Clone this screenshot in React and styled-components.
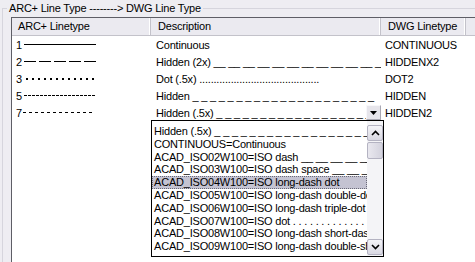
import React from 'react';
import styled, { createGlobalStyle } from 'styled-components';

const Global = createGlobalStyle`
  html, body { margin: 0; padding: 0; background: #EEEDF2; }
  body {
    font-family: "Liberation Sans", Arial, sans-serif;
    font-size: 11px;
    letter-spacing: -0.2px;
    color: #000;
  }
  * { box-sizing: border-box; }
`;

const Window = styled.div`
  width: 475px;
  height: 262px;
  overflow: hidden;
  background: #EEEDF2;
  padding-top: 2px;
`;

const Group = styled.fieldset`
  margin: 0 0 0 2px;
  padding: 2px 0 0 8px;
  min-width: 0;
  border: 1px solid #D6D5DD;
  border-right: none;
  border-bottom: none;
`;

const Legend = styled.legend`
  margin-left: -4px;
  padding: 0 2px;
  line-height: 13px;
  white-space: nowrap;
`;

const ListView = styled.div`
  position: relative;
  width: 480px;
  height: 260px;
  background: #fff;
  border-top: 1px solid #5E5E66;
  border-left: 1px solid #5E5E66;
`;

const cols = '139px 230px 85px 1fr';

const HeaderRow = styled.div`
  display: grid;
  grid-template-columns: ${cols};
  height: 18px;
  background: #EBEAF0;
  border-bottom: 1px solid #C3C2CA;
`;

const HeaderCell = styled.div`
  padding-left: ${p => (p.$first ? 6 : 7)}px;
  line-height: 17px;
  border-right: 1px solid #C3C2CA;
  box-shadow: inset -1px 0 0 #fff;
  white-space: nowrap;
  overflow: hidden;
`;

const Row = styled.div`
  display: grid;
  grid-template-columns: ${cols};
  height: 17px;
  align-items: center;
`;

const NumCell = styled.div`
  display: flex;
  align-items: center;
  padding-left: 4px;
  gap: ${p => p.$gap}px;
  white-space: nowrap;
`;

const Cell = styled.div`
  padding-left: ${p => p.$pad}px;
  white-space: nowrap;
  overflow: ${p => (p.$visible ? 'visible' : 'hidden')};
`;

const Combo = styled.div`
  display: flex;
  align-items: center;
  width: 232px;
  height: 17px;
  margin-left: -1px;
  padding-left: 6px;
`;

const ComboText = styled.div`
  flex: 1;
  overflow: hidden;
  white-space: nowrap;
`;

const ComboButton = styled.div`
  width: 15px;
  height: 15px;
  display: flex;
  align-items: center;
  justify-content: center;
  background: #E6E5EB;
  border: 1px solid #A9A8B3;
  border-top-color: #F7F7FA;
  border-left-color: #F7F7FA;
  margin-right: 1px;
`;

const DropList = styled.div`
  position: absolute;
  left: 139px;
  top: 102px;
  width: 233px;
  height: 137px;
  border: 1px solid #000;
  background: #fff;
  display: flex;
`;

const Items = styled.div`
  flex: 1;
  min-width: 0;
  padding-top: 4px;
`;

const Item = styled.div`
  height: 12.8px;
  line-height: 12.8px;
  padding-left: 2px;
  white-space: nowrap;
  overflow: hidden;
  background: ${p => (p.$selected ? '#C4C3D2' : 'transparent')};
  outline: ${p => (p.$selected ? '1px dotted #6A6A78' : 'none')};
  outline-offset: -1px;
`;

const ScrollBar = styled.div`
  width: 16px;
  display: flex;
  flex-direction: column;
  padding: 4px 0 1px;
  background: #F4F4F7;
`;

const ScrollBtn = styled.div`
  height: 16px;
  flex: none;
  display: flex;
  align-items: center;
  justify-content: center;
  background: linear-gradient(#F4F4F8, #D9D8E2);
  border: 1px solid #B4B3C2;
  border-radius: 2px;
`;

const Thumb = styled.div`
  height: 17px;
  flex: none;
  margin-top: 1px;
  background: linear-gradient(90deg, #E9E8EF, #D3D2DD);
  border: 1px solid #B4B3C2;
  border-radius: 2px;
`;

const Track = styled.div`
  flex: 1;
`;

function Sample({ kind }) {
  const w = 74;
  let shapes = null;
  if (kind === 'solid') {
    shapes = <rect x="0" y="4" width="72" height="1" fill="#000" />;
  } else if (kind === 'dash') {
    shapes = [0, 1, 2, 3, 4].map(i => (
      <rect key={i} x={i * 15} y="4" width="12" height="1" fill="#000" />
    ));
  } else if (kind === 'dot') {
    shapes = Array.from({ length: 12 }, (_, i) => (
      <rect key={i} x={2 + i * 6} y="4" width="2" height="2" fill="#000" />
    ));
  } else if (kind === 'fine') {
    shapes = Array.from({ length: 18 }, (_, i) => (
      <rect key={i} x={i * 4} y="4" width="3" height="1" fill="#000" />
    ));
  } else if (kind === 'dashed') {
    shapes = Array.from({ length: 12 }, (_, i) => (
      <rect key={i} x={i * 6} y="4" width="3" height="1" fill="#000" />
    ));
  }
  return (
    <svg width={w} height="9" viewBox={`0 0 ${w} 9`}>
      {shapes}
    </svg>
  );
}

function Chevron({ up }) {
  return (
    <svg width="9" height="6" viewBox="0 0 9 6">
      <path
        d={up ? 'M1 5 L4.5 1.5 L8 5' : 'M1 1 L4.5 4.5 L8 1'}
        fill="none"
        stroke="#000"
        strokeWidth="1.6"
      />
    </svg>
  );
}

const rows = [
  { n: '1', kind: 'solid', desc: 'Continuous', dwg: 'CONTINUOUS' },
  { n: '2', kind: 'dash', desc: 'Hidden (2x) __ __ __ __ __ __ __ __ __ __ __ __', dwg: 'HIDDENX2' },
  { n: '3', kind: 'dot', desc: 'Dot (.5x) ..........................................', dwg: 'DOT2' },
  { n: '5', kind: 'fine', desc: 'Hidden _ _ _ _ _ _ _ _ _ _ _ _ _ _ _ _ _ _ _ _ _', dwg: 'HIDDEN' },
  { n: '7', kind: 'dashed', desc: null, dwg: 'HIDDEN2' },
];

const items = [
  'Hidden (.5x) _ _ _ _ _ _ _ _ _ _ _ _ _ _ _ _ _ _ _ _',
  'CONTINUOUS=Continuous',
  'ACAD_ISO02W100=ISO dash __ __ __ __ __ __',
  'ACAD_ISO03W100=ISO dash space __ __ __ __',
  'ACAD_ISO04W100=ISO long-dash dot',
  'ACAD_ISO05W100=ISO long-dash double-dot',
  'ACAD_ISO06W100=ISO long-dash triple-dot',
  'ACAD_ISO07W100=ISO dot . . . . . . . . . . . . . .',
  'ACAD_ISO08W100=ISO long-dash short-dash',
  'ACAD_ISO09W100=ISO long-dash double-short-dash',
];

export default function App() {
  return (
    <>
      <Global />
      <Window>
        <Group>
          <Legend>ARC+ Line Type --------&gt; DWG Line Type</Legend>
          <ListView>
            <HeaderRow>
              <HeaderCell $first>ARC+ Linetype</HeaderCell>
              <HeaderCell>Description</HeaderCell>
              <HeaderCell>DWG Linetype</HeaderCell>
              <HeaderCell />
            </HeaderRow>
            {rows.map(r => (
              <Row key={r.n}>
                <NumCell $gap={r.n === '7' ? 1 : 2}>
                  {r.n}
                  <Sample kind={r.kind} />
                </NumCell>
                {r.desc ? (
                  <Cell $pad={5}>{r.desc}</Cell>
                ) : (
                  <Cell $pad={0} $visible>
                    <Combo>
                      <ComboText>Hidden (.5x) _ _ _ _ _ _ _ _ _ _ _ _ _ _ _ _ _ _ _</ComboText>
                      <ComboButton>
                        <svg width="7" height="4" viewBox="0 0 7 4">
                          <path d="M0 0 H7 L3.5 4 Z" fill="#000" />
                        </svg>
                      </ComboButton>
                    </Combo>
                  </Cell>
                )}
                <Cell $pad={4}>{r.dwg}</Cell>
                <Cell $pad={0} />
              </Row>
            ))}
            <DropList>
              <Items>
                {items.map((t, i) => (
                  <Item key={i} $selected={i === 4}>{t}</Item>
                ))}
              </Items>
              <ScrollBar>
                <ScrollBtn><Chevron up /></ScrollBtn>
                <Thumb />
                <Track />
                <ScrollBtn><Chevron /></ScrollBtn>
              </ScrollBar>
            </DropList>
          </ListView>
        </Group>
      </Window>
    </>
  );
}
